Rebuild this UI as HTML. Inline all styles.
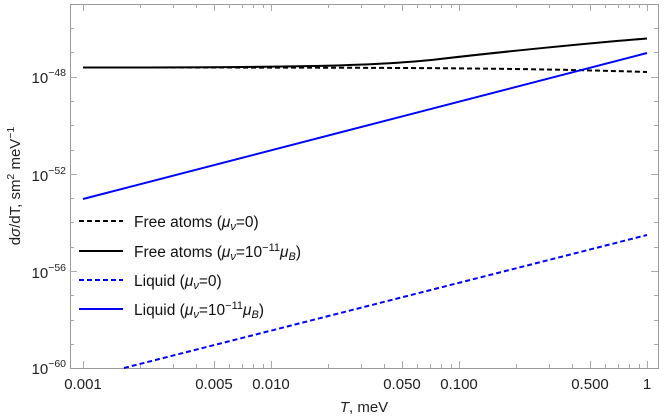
<!DOCTYPE html>
<html><head><meta charset="utf-8"><style>
body{margin:0;background:#fff}
svg{display:block;font-family:"Liberation Sans",sans-serif}
</style></head><body>
<svg width="664" height="417" viewBox="0 0 664 417">
<rect x="70.5" y="4.5" width="588" height="364" fill="none" stroke="#999" stroke-width="1"/>
<g stroke="#aaa" stroke-width="1">
<path d="M70 28.5h4M70 52.5h4M70 77.5h7M70 101.5h4M70 125.5h4M70 150.5h4M70 174.5h7M70 198.5h4M70 222.5h4M70 247.5h4M70 271.5h7M70 295.5h4M70 320.5h4M70 344.5h4
M658 28.5h-4M658 52.5h-4M658 77.5h-7M658 101.5h-4M658 125.5h-4M658 150.5h-4M658 174.5h-7M658 198.5h-4M658 222.5h-4M658 247.5h-4M658 271.5h-7M658 295.5h-4M658 320.5h-4M658 344.5h-4"/>
<path d="M83.5 368v-7M140.5 368v-4M173.5 368v-4M196.5 368v-4M214.5 368v-7M229.5 368v-4M242.5 368v-4M253.5 368v-4M263.5 368v-4M271.5 368v-7M328.5 368v-4M361.5 368v-4M384.5 368v-4M402.5 368v-7M417.5 368v-4M430.5 368v-4M441.5 368v-4M451.5 368v-4M459.5 368v-7M516.5 368v-4M549.5 368v-4M572.5 368v-4M590.5 368v-7M605.5 368v-4M618.5 368v-4M629.5 368v-4M639.5 368v-4M647.5 368v-7
M83.5 4v7M140.5 4v4M173.5 4v4M196.5 4v4M214.5 4v7M229.5 4v4M242.5 4v4M253.5 4v4M263.5 4v4M271.5 4v7M328.5 4v4M361.5 4v4M384.5 4v4M402.5 4v7M417.5 4v4M430.5 4v4M441.5 4v4M451.5 4v4M459.5 4v7M516.5 4v4M549.5 4v4M572.5 4v4M590.5 4v7M605.5 4v4M618.5 4v4M629.5 4v4M639.5 4v4M647.5 4v7"/>
</g>
<path d="M83 67.5C300 67.5 380 66 440 59S600 42 647 38.5" fill="none" stroke="#000" stroke-width="2"/>
<path d="M83 67.5C420 67.5 520 68 647 72" fill="none" stroke="#000" stroke-width="2" stroke-dasharray="5,3"/>
<path d="M83 199L647 53" fill="none" stroke="#0000ff" stroke-width="2"/>
<path d="M124 368L647 235" fill="none" stroke="#0000ff" stroke-width="2" stroke-dasharray="5,3"/>
<path d="M79 221h44" stroke="#000" stroke-width="2" stroke-dasharray="5,3"/>
<path d="M79 251h44" stroke="#000" stroke-width="2"/>
<path d="M79 280h44" stroke="#0000ff" stroke-width="2" stroke-dasharray="5,3"/>
<path d="M79 309h44" stroke="#0000ff" stroke-width="2"/>
<g font-size="15.5" fill="#111">
<text x="134" y="227">Free atoms (<tspan font-style="italic">μ<tspan font-size="11" dy="3">ν</tspan></tspan><tspan dy="-3">=0)</tspan></text>
<text x="134" y="257">Free atoms (<tspan font-style="italic">μ<tspan font-size="11" dy="3">ν</tspan></tspan><tspan dy="-3">=10</tspan><tspan font-size="11" dy="-6">−11</tspan><tspan font-style="italic" dy="6">μ<tspan font-size="11" dy="3">B</tspan></tspan><tspan dy="-3">)</tspan></text>
<text x="134" y="286">Liquid (<tspan font-style="italic">μ<tspan font-size="11" dy="3">ν</tspan></tspan><tspan dy="-3">=0)</tspan></text>
<text x="134" y="315">Liquid (<tspan font-style="italic">μ<tspan font-size="11" dy="3">ν</tspan></tspan><tspan dy="-3">=10</tspan><tspan font-size="11" dy="-6">−11</tspan><tspan font-style="italic" dy="6">μ<tspan font-size="11" dy="3">B</tspan></tspan><tspan dy="-3">)</tspan></text>
</g>
<g font-size="15" fill="#222" text-anchor="end">
<text x="66" y="83">10<tspan font-size="10.5" dy="-7">−48</tspan></text>
<text x="66" y="181">10<tspan font-size="10.5" dy="-7">−52</tspan></text>
<text x="66" y="278">10<tspan font-size="10.5" dy="-7">−56</tspan></text>
<text x="66" y="374">10<tspan font-size="10.5" dy="-7">−60</tspan></text>
</g>
<g font-size="15" fill="#222" text-anchor="middle">
<text x="83" y="389">0.001</text>
<text x="214" y="389">0.005</text>
<text x="271" y="389">0.010</text>
<text x="402" y="389">0.050</text>
<text x="459" y="389">0.100</text>
<text x="590" y="389">0.500</text>
<text x="647" y="389">1</text>
<text x="364" y="412"><tspan font-style="italic">T</tspan>,  meV</text>
</g>
<text transform="translate(20,186) rotate(-90)" font-size="15" fill="#222" text-anchor="middle">d<tspan font-style="italic">σ</tspan>/dT,  sm<tspan font-size="10.5" dy="-6">2</tspan><tspan dy="6"> meV</tspan><tspan font-size="10.5" dy="-6">−1</tspan></text>
</svg>
</body></html>
